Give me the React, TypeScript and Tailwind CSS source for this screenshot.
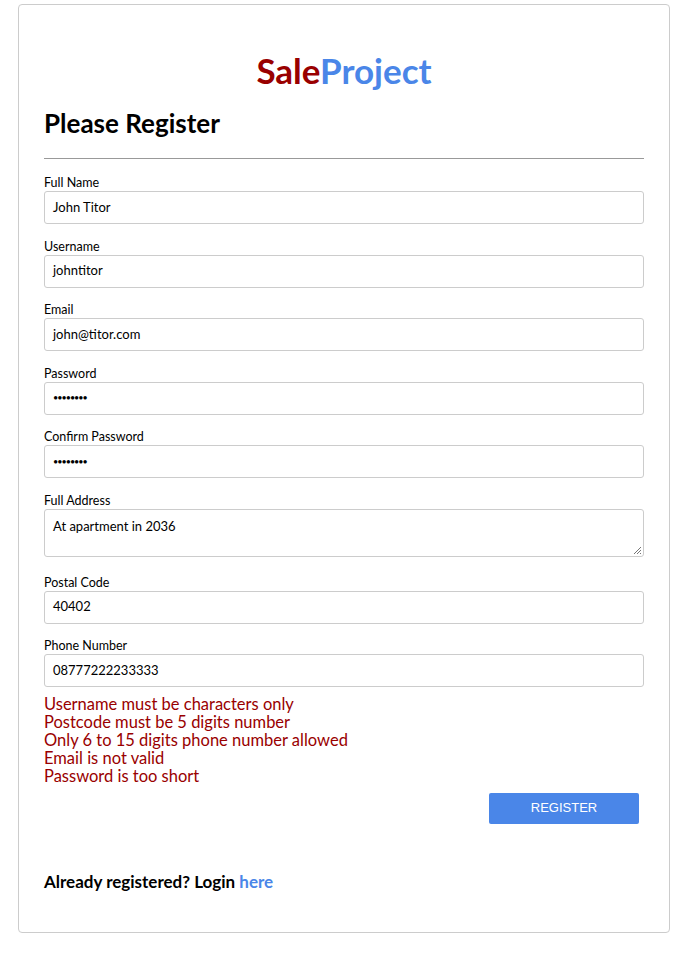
const fields = [
  { label: "Full Name", value: "John Titor" },
  { label: "Username", value: "johntitor" },
  { label: "Email", value: "john@titor.com" },
  { label: "Password", value: "••••••••", password: true },
  { label: "Confirm Password", value: "••••••••", password: true },
];

const errors = [
  "Username must be characters only",
  "Postcode must be 5 digits number",
  "Only 6 to 15 digits phone number allowed",
  "Email is not valid",
  "Password is too short",
];

function Field({ label, value, password }: { label: string; value: string; password?: boolean }) {
  return (
    <div className="mb-[13.5px]">
      <label className="block text-[12.5px] leading-[17px] text-black">{label}</label>
      <div
        className={`flex h-[33px] items-center rounded-[3px] border border-[#cccccc] px-[8px] text-black ${
          password ? "text-[9px] tracking-[-1px]" : "text-[13px]"
        }`}
      >
        {value}
      </div>
    </div>
  );
}

export default function App() {
  return (
    <div className="min-h-[953px] bg-white pt-[4px] font-['Lato','Noto_Sans',sans-serif]">
      <div className="ml-[18px] w-[652px] rounded-[4px] border border-[#cccccc] px-[25px] pb-[40px]">
        <h1 className="mt-[44px] text-center text-[35px] font-bold leading-[42px]">
          <span className="text-[#990000]">Sale</span>
          <span className="text-[#4a86e8]">Project</span>
        </h1>
        <h2 className="mt-[16px] text-[26px] font-bold leading-[32px] text-black">Please Register</h2>
        <hr className="mt-[19px] border-t-[1px] border-[#999999]" />
        <div className="mt-[15px]">
          {fields.map((f) => (
            <Field key={f.label} {...f} />
          ))}
          <div className="mb-[17px]">
            <label className="block text-[12.5px] leading-[17px] text-black">Full Address</label>
            <div className="relative h-[48px] rounded-[3px] border border-[#cccccc] px-[8px] pt-[7px] text-[13px] text-black">
              At apartment in 2036
              <svg className="absolute bottom-[1px] right-[1px]" width="9" height="9" viewBox="0 0 9 9">
                <path d="M8 1 L1 8 M8 4 L4 8 M8 7 L7 8" stroke="#777" strokeWidth="1" />
              </svg>
            </div>
          </div>
          <Field label="Postal Code" value="40402" />
          <Field label="Phone Number" value="08777222233333" />
        </div>
        <div className="-mt-[6px] text-[16.5px] leading-[18px] text-[#990000]">
          {errors.map((e) => (
            <div key={e}>{e}</div>
          ))}
        </div>
        <div className="mt-[8px] flex justify-end pr-[5px]">
          <button
            type="button"
            className="h-[31px] w-[150px] rounded-[2px] bg-[#4a86e8] font-['Liberation_Sans',sans-serif] text-[13px] text-white"
          >
            REGISTER
          </button>
        </div>
        <p className="mt-[48px] text-[17px] font-bold leading-[20px] text-black">
          Already registered? Login <a className="text-[#4a86e8]">here</a>
        </p>
      </div>
    </div>
  );
}
